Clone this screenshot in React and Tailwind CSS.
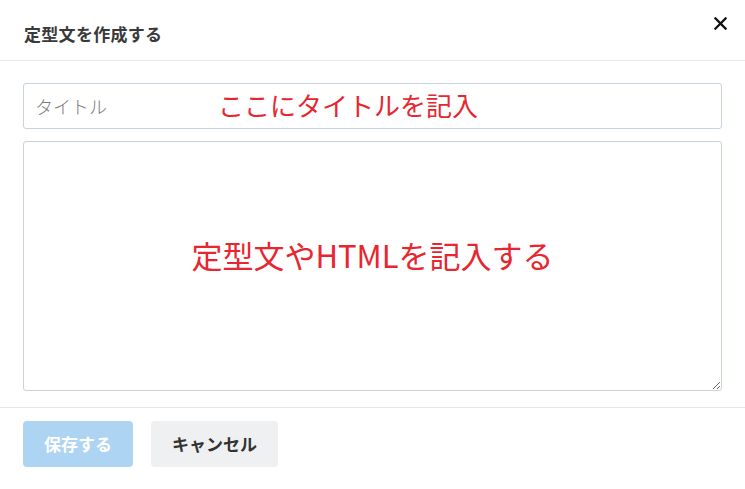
import React from 'react';

const jp = { fontFamily: '"Noto Sans CJK JP", "Noto Sans", sans-serif' };

export default function App() {
  return (
    <div className="w-[745px] h-[489px] bg-white flex flex-col text-[#333]" style={jp}>
      {/* Header */}
      <div className="h-[61px] flex items-center justify-between pl-[24px] pr-[18px] border-b border-[#e3e8ec]">
        <h1 className="text-[17px] font-bold tracking-[0.3px] mt-[8px] text-[#3a3a3a]">定型文を作成する</h1>
        <button className="self-start mt-[16px] w-[14px] h-[14px] flex items-center justify-center">
          <svg viewBox="0 0 14 14" className="w-[13px] h-[13px]">
            <path d="M1.5 1.5 L12.5 12.5 M12.5 1.5 L1.5 12.5" stroke="#111" strokeWidth="2.4" strokeLinecap="square" />
          </svg>
        </button>
      </div>

      {/* Body */}
      <div className="flex flex-col gap-[12px] px-[23px] pt-[22px] pb-[16px] border-b border-[#e3e8ec]">
        <div className="relative">
          <input
            placeholder="タイトル"
            className="w-full h-[46px] border border-[#c8d3db] rounded-[3px] px-[11px] text-[18px] font-light placeholder:text-[#7a7a7a] outline-none"
            style={jp}
          />
          <span className="absolute left-[195px] top-[2px] text-[26px] text-[#e8262f] pointer-events-none leading-[40px]">
            ここにタイトルを記入
          </span>
        </div>
        <div className="relative">
          <textarea
            className="block w-full h-[250px] border border-[#c8d3db] rounded-[3px] px-[11px] py-[8px] text-[17px] outline-none resize-y"
            style={jp}
          />
          <span className="absolute left-0 right-0 top-[94px] text-center text-[31px] text-[#e8262f] pointer-events-none leading-[40px]">
            定型文やHTMLを記入する
          </span>
        </div>
      </div>

      {/* Footer */}
      <div className="flex gap-[18px] px-[23px] pt-[13px]">
        <button className="w-[110px] h-[46px] rounded-[4px] bg-[#aed4f3] text-white text-[17px] font-bold">保存する</button>
        <button className="w-[127px] h-[46px] rounded-[4px] bg-[#eff0f2] text-[#333] text-[17px] font-bold">キャンセル</button>
      </div>
    </div>
  );
}
